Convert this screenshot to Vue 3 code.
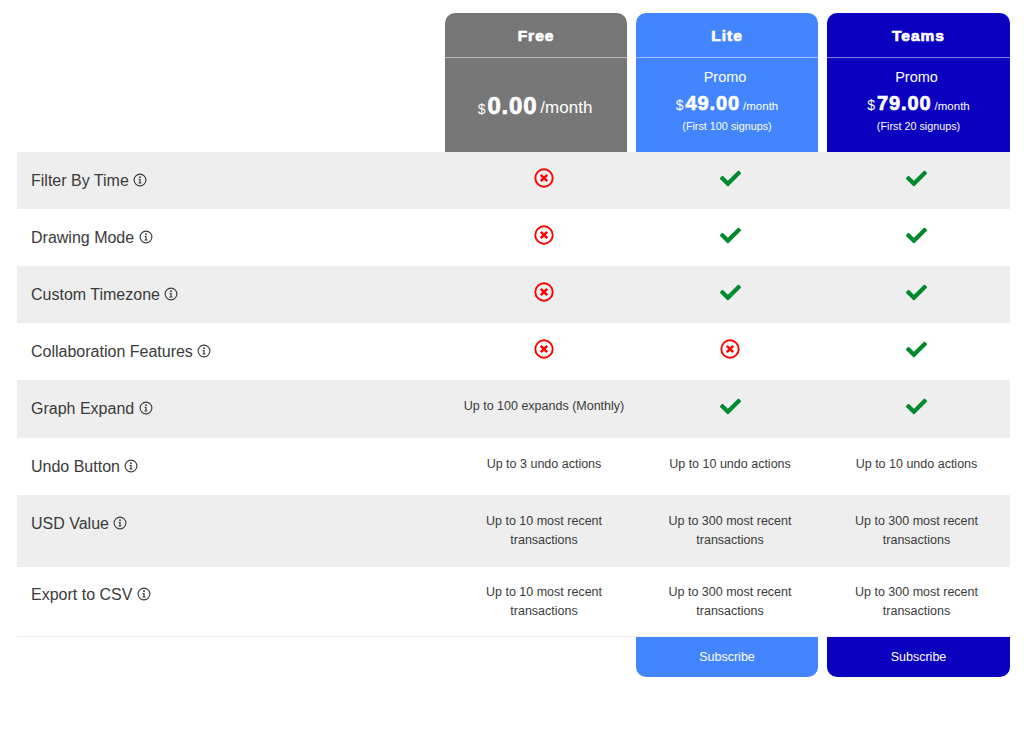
<script setup>
const plans = [
  { name: 'Free', cls: 'free', amount: '0.00' },
  { name: 'Lite', cls: 'lite', amount: '49.00', note: '(First 100 signups)' },
  { name: 'Teams', cls: 'teams', amount: '79.00', note: '(First 20 signups)' }
]
const Y = { t: 'y' }
const N = { t: 'n' }
const rows = [
  { label: 'Filter By Time', h: 57, cells: [N, Y, Y] },
  { label: 'Drawing Mode', h: 57, cells: [N, Y, Y] },
  { label: 'Custom Timezone', h: 57, cells: [N, Y, Y] },
  { label: 'Collaboration Features', h: 57, cells: [N, N, Y] },
  { label: 'Graph Expand', h: 58, cells: ['Up to 100 expands (Monthly)', Y, Y] },
  { label: 'Undo Button', h: 57, cells: ['Up to 3 undo actions', 'Up to 10 undo actions', 'Up to 10 undo actions'] },
  { label: 'USD Value', h: 72, cells: ['Up to 10 most recent transactions', 'Up to 300 most recent transactions', 'Up to 300 most recent transactions'] },
  { label: 'Export to CSV', h: 69, cells: ['Up to 10 most recent transactions', 'Up to 300 most recent transactions', 'Up to 300 most recent transactions'] }
]
</script>

<template>
  <div class="page">
    <div class="head">
      <div></div>
      <div v-for="p in plans" :key="p.name" class="card" :class="p.cls">
        <div class="title">{{ p.name }}</div>
        <div class="price">
          <div v-if="p.note" class="promo">Promo</div>
          <div class="amount">
            <span class="cur">$</span><span class="num">{{ p.amount }}</span><span class="per">/month</span>
          </div>
          <div v-if="p.note" class="note">{{ p.note }}</div>
        </div>
      </div>
    </div>

    <div class="table">
      <div v-for="r in rows" :key="r.label" class="row" :style="{ height: r.h + 'px' }">
        <div class="label">
          {{ r.label }}
          <svg class="info" viewBox="0 0 14 14" width="14" height="14">
            <circle cx="7" cy="7" r="5.9" fill="none" stroke="#3a3a3a" stroke-width="1.1" />
            <circle cx="7" cy="4.2" r="0.95" fill="#3a3a3a" />
            <path d="M5.6 6h2v3.6h0.8v0.9H5.5v-0.9h0.9V6.9H5.6z" fill="#3a3a3a" />
          </svg>
        </div>
        <div v-for="(c, i) in r.cells" :key="i" class="cell">
          <svg v-if="c.t === 'y'" class="check" viewBox="0 0 512 512" width="21" height="21">
            <path fill="#008a2e" d="M173.898 439.404l-166.4-166.4c-9.997-9.997-9.997-26.206 0-36.204l36.203-36.204c9.997-9.998 26.207-9.998 36.204 0L192 312.69 432.095 72.596c9.997-9.997 26.207-9.997 36.204 0l36.203 36.204c9.997 9.997 9.997 26.206 0 36.204l-294.4 294.401c-9.998 9.997-26.207 9.997-36.204-.001z" />
          </svg>
          <svg v-else-if="c.t === 'n'" class="cross" viewBox="0 0 20 20" width="20" height="20">
            <circle cx="10" cy="10" r="8.7" fill="none" stroke="#ff0000" stroke-width="1.9" />
            <path d="M6.8 6.8l6.4 6.4M13.2 6.8l-6.4 6.4" fill="none" stroke="#ff0000" stroke-width="2.5" />
          </svg>
          <span v-else>{{ c }}</span>
        </div>
      </div>
    </div>

    <div class="foot">
      <div></div>
      <div class="empty"></div>
      <button class="sub lite">Subscribe</button>
      <button class="sub teams">Subscribe</button>
    </div>
  </div>
</template>

<style scoped>
.page {
  width: 993px;
  margin-left: 17px;
  padding-top: 13px;
  font-family: "Liberation Sans", Arial, sans-serif;
  color: #3a3a3a;
}
.head, .foot {
  display: grid;
  grid-template-columns: 419px 182px 182px 183px;
  column-gap: 9px;
}
.card {
  height: 139px;
  border-radius: 10px 10px 0 0;
  color: #fff;
  text-align: center;
  overflow: hidden;
}
.free { background: #777; }
.lite { background: #4285ff; }
.teams { background: #0b00bf; }
.title {
  height: 44px;
  line-height: 45px;
  font-size: 15.5px;
  font-weight: 700;
  letter-spacing: 1px;
  -webkit-text-stroke: 0.7px #fff;
  border-bottom: 1px solid rgba(255, 255, 255, 0.5);
}
.price {
  height: 94px;
  padding-top: 11px;
  box-sizing: border-box;
}
.free .price {
  padding-top: 31px;
  padding-right: 2px;
}
.promo {
  font-size: 14.5px;
  line-height: 17px;
  padding-right: 4px;
}
.amount {
  margin-top: 5px;
  line-height: 24px;
  font-size: 11.5px;
}
.cur { font-size: 14px; margin-right: 2px; }
.num {
  font-size: 20px;
  font-weight: 700;
  letter-spacing: 0.9px;
  -webkit-text-stroke: 0.7px #fff;
  margin-right: 3px;
}
.free .cur { font-size: 14px; }
.free .num { font-size: 24px; letter-spacing: 0.8px; }
.free .per { font-size: 17px; vertical-align: 1px; }
.note {
  margin-top: 2px;
  font-size: 10.8px;
  line-height: 13px;
}
.row {
  display: grid;
  grid-template-columns: 434px 186px 186px 187px;
}
.row:nth-child(odd) { background: #eee; }
.label {
  padding: 18.5px 0 0 14px;
  font-size: 16px;
  line-height: 20px;
  white-space: nowrap;
}
.info {
  vertical-align: -1px;
}
.cell {
  padding: 17px 10px 0;
  text-align: center;
  font-size: 12.5px;
  line-height: 19px;
}
.row:last-child .cell { padding-top: 16px; }
.row:last-child .label { padding-top: 18px; }
.check, .cross { display: block; margin: -1px auto 0; }
.table { border-bottom: 1px solid #eee; }
.foot { height: 40px; }
.sub {
  border: 0;
  padding: 0;
  height: 40px;
  border-radius: 0 0 10px 10px;
  color: #fff;
  font: 12.5px "Liberation Sans", Arial, sans-serif;
}
</style>
